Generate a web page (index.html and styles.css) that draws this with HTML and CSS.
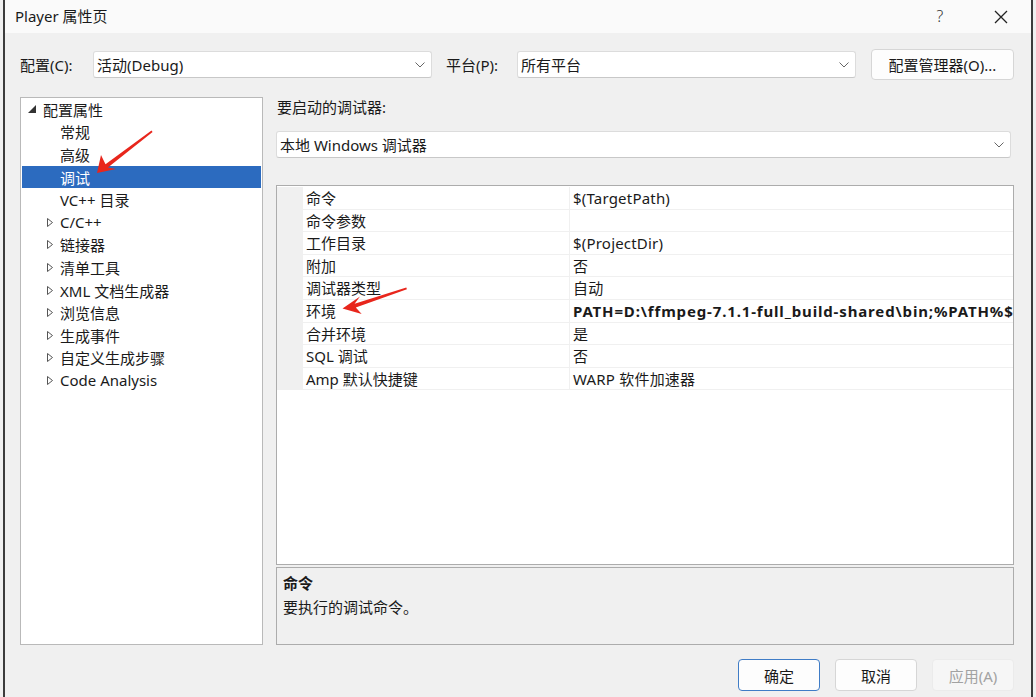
FILE: index.html
```html
<!DOCTYPE html>
<html lang="zh-CN">
<head>
    <meta charset="UTF-8">
    <title>Player 属性页</title>
    <link rel="stylesheet" href="styles.css">
</head>
<body>
    <div class="window">
        <div class="titlebar">
            <span class="title">Player 属性页</span>
            <span class="help">?</span>
            <span class="close">
                <svg width="14" height="14" viewBox="0 0 14 14"><path d="M1 1 L13 13 M13 1 L1 13" stroke="#222" stroke-width="1.3" fill="none"/></svg>
            </span>
        </div>

        <div class="config-row">
            <span class="cfg-label">配置(C):</span>
            <div class="combo combo-short">
                <span>活动(Debug)</span>
                <svg class="chevron" width="10" height="6" viewBox="0 0 10 6"><path d="M0.5 0.5 L5 5 L9.5 0.5" stroke="#666" stroke-width="1" fill="none"/></svg>
            </div>
            <span class="cfg-label platform-label">平台(P):</span>
            <div class="combo combo-short">
                <span>所有平台</span>
                <svg class="chevron" width="10" height="6" viewBox="0 0 10 6"><path d="M0.5 0.5 L5 5 L9.5 0.5" stroke="#666" stroke-width="1" fill="none"/></svg>
            </div>
            <button class="btn btn-manager">配置管理器(O)...</button>
        </div>

        <div class="main">
            <!-- дерево свойств -->
            <div class="tree">
                <div class="tree-item root">
                    <span class="twisty"><svg width="8" height="8" viewBox="0 0 8 8"><polygon points="0,8 8,8 8,0" fill="#333"/></svg></span>
                    配置属性
                </div>
                <div class="tree-item child">常规</div>
                <div class="tree-item child">高级</div>
                <div class="tree-item child selected">调试</div>
                <div class="tree-item child">VC++ 目录</div>
                <div class="tree-item child"><span class="twisty"><svg width="6" height="9" viewBox="0 0 6 9"><polygon points="0.5,0.5 5.5,4.5 0.5,8.5" fill="none" stroke="#555"/></svg></span>C/C++</div>
                <div class="tree-item child"><span class="twisty"><svg width="6" height="9" viewBox="0 0 6 9"><polygon points="0.5,0.5 5.5,4.5 0.5,8.5" fill="none" stroke="#555"/></svg></span>链接器</div>
                <div class="tree-item child"><span class="twisty"><svg width="6" height="9" viewBox="0 0 6 9"><polygon points="0.5,0.5 5.5,4.5 0.5,8.5" fill="none" stroke="#555"/></svg></span>清单工具</div>
                <div class="tree-item child"><span class="twisty"><svg width="6" height="9" viewBox="0 0 6 9"><polygon points="0.5,0.5 5.5,4.5 0.5,8.5" fill="none" stroke="#555"/></svg></span>XML 文档生成器</div>
                <div class="tree-item child"><span class="twisty"><svg width="6" height="9" viewBox="0 0 6 9"><polygon points="0.5,0.5 5.5,4.5 0.5,8.5" fill="none" stroke="#555"/></svg></span>浏览信息</div>
                <div class="tree-item child"><span class="twisty"><svg width="6" height="9" viewBox="0 0 6 9"><polygon points="0.5,0.5 5.5,4.5 0.5,8.5" fill="none" stroke="#555"/></svg></span>生成事件</div>
                <div class="tree-item child"><span class="twisty"><svg width="6" height="9" viewBox="0 0 6 9"><polygon points="0.5,0.5 5.5,4.5 0.5,8.5" fill="none" stroke="#555"/></svg></span>自定义生成步骤</div>
                <div class="tree-item child"><span class="twisty"><svg width="6" height="9" viewBox="0 0 6 9"><polygon points="0.5,0.5 5.5,4.5 0.5,8.5" fill="none" stroke="#555"/></svg></span>Code Analysis</div>
            </div>

            <div class="pane">
                <div class="pane-label">要启动的调试器:</div>
                <div class="combo combo-wide">
                    <span>本地 Windows 调试器</span>
                    <svg class="chevron" width="10" height="6" viewBox="0 0 10 6"><path d="M0.5 0.5 L5 5 L9.5 0.5" stroke="#666" stroke-width="1" fill="none"/></svg>
                </div>

                <!-- сетка свойств -->
                <div class="grid">
                    <div class="prop-row"><span class="gutter"></span><span class="name">命令</span><span class="value">$(TargetPath)</span></div>
                    <div class="prop-row"><span class="gutter"></span><span class="name">命令参数</span><span class="value"></span></div>
                    <div class="prop-row"><span class="gutter"></span><span class="name">工作目录</span><span class="value">$(ProjectDir)</span></div>
                    <div class="prop-row"><span class="gutter"></span><span class="name">附加</span><span class="value">否</span></div>
                    <div class="prop-row"><span class="gutter"></span><span class="name">调试器类型</span><span class="value">自动</span></div>
                    <div class="prop-row"><span class="gutter"></span><span class="name">环境</span><span class="value bold">PATH=D:\ffmpeg-7.1.1-full_build-shared\bin;%PATH%$</span></div>
                    <div class="prop-row"><span class="gutter"></span><span class="name">合并环境</span><span class="value">是</span></div>
                    <div class="prop-row"><span class="gutter"></span><span class="name">SQL 调试</span><span class="value">否</span></div>
                    <div class="prop-row"><span class="gutter"></span><span class="name">Amp 默认快捷键</span><span class="value">WARP 软件加速器</span></div>
                </div>

                <div class="desc">
                    <div class="desc-title">命令</div>
                    <div>要执行的调试命令。</div>
                </div>
            </div>
        </div>

        <div class="footer">
            <button class="btn btn-ok">确定</button>
            <button class="btn">取消</button>
            <button class="btn btn-disabled">应用(A)</button>
        </div>
    </div>

    <!-- красные стрелки поверх скриншота -->
    <svg class="annotations" width="1036" height="697" viewBox="0 0 1036 697">
        <polygon points="97,173 101,155 105.5,164.3 151.5,130.5 152.6,131.9 107.9,167.5 116,169" fill="#e8261c"/>
        <polygon points="342.5,308.5 360,296.5 354.6,303.7 406.3,287.6 406.9,289.2 355.8,307.5 361.7,314" fill="#e8261c"/>
    </svg>
</body>
</html>
```

FILE: styles.css
```css
* {
    box-sizing: border-box;
}

html, body {
    margin: 0;
    padding: 0;
}

body {
    width: 1036px;
    height: 697px;
    overflow: hidden;
    position: relative;
    background: #f0f0f0;
    font-family: "Noto Sans", "Noto Sans CJK SC", sans-serif;
    font-size: 15px;
    color: #1a1a1a;
}

/* Окно диалога */
.window {
    margin-left: 3px;
    width: 1030px;
    height: 697px;
    border-left: 2px solid #3c3c3c;
    border-right: 2px solid #3c3c3c;
    display: flex;
    flex-direction: column;
}

.titlebar {
    height: 33px;
    background: #fafafa;
    display: flex;
    align-items: center;
    padding: 0 15px 2px 10px;
}

.title {
    flex: 1;
}

.help {
    width: 30px;
    text-align: center;
    font-weight: 300;
    font-size: 16px;
    color: #333;
}

.close {
    width: 30px;
    margin-left: 31px;
    display: flex;
    justify-content: center;
    padding-top: 2px;
}

/* Строка конфигурации */
.config-row {
    margin-top: 16px;
    height: 31px;
    padding-left: 15px;
    display: flex;
    align-items: center;
}

.cfg-label {
    width: 73px;
    white-space: nowrap;
}

.platform-label {
    margin-left: 14px;
    width: 71px;
}

.combo {
    height: 27px;
    background: #fff;
    border: 1px solid #dcdcdc;
    border-bottom-color: #c8c8c8;
    border-radius: 3px;
    display: flex;
    align-items: center;
    justify-content: space-between;
    padding: 0 6px 0 3px;
    white-space: nowrap;
}

.combo-short {
    width: 339px;
}

.combo-wide {
    width: 735px;
    margin-top: 14px;
}

.chevron {
    flex-shrink: 0;
}

.btn {
    font-family: inherit;
    font-size: 15px;
    color: #1a1a1a;
    background: #fdfdfd;
    border: 1px solid #d6d6d6;
    border-radius: 4px;
    width: 82px;
    height: 32px;
    padding: 0;
}

.btn-manager {
    margin-left: 15px;
    width: 143px;
    height: 31px;
}

/* Основная часть */
.main {
    margin-top: 17px;
    height: 548px;
    padding-left: 15px;
    display: flex;
    gap: 13px;
}

.tree {
    width: 243px;
    background: #fff;
    border: 1px solid #b9b9b9;
    padding: 0 1px 1px;
}

.tree-item {
    height: 22.6px;
    display: flex;
    align-items: center;
    white-space: nowrap;
}

.tree-item.root {
    padding-left: 6px;
}

.tree-item.root .twisty {
    width: 15px;
}

.tree-item.child {
    padding-left: 38px;
}

.tree-item.child .twisty {
    width: 13px;
    margin-left: -13px;
}

.twisty {
    display: flex;
    align-items: center;
}

.tree-item.selected {
    background: #2c6bbf;
    color: #fff;
}

.pane {
    width: 738px;
    display: flex;
    flex-direction: column;
}

.pane-label {
    height: 20px;
    line-height: 20px;
    padding-left: 1px;
}

/* Сетка свойств */
.grid {
    margin-top: 27px;
    height: 380px;
    background: #fff;
    border: 1px solid #acacac;
    padding-top: 1px;
    overflow: hidden;
}

.prop-row {
    display: grid;
    grid-template-columns: 26px 267px 1fr;
    height: 22.6px;
    border-bottom: 1px solid #f0f0f0;
    white-space: nowrap;
}

.gutter {
    background: #f0f0f0;
}

.name {
    padding-left: 3px;
    line-height: 22.6px;
    border-right: 1px solid #f0f0f0;
}

.value {
    padding-left: 3px;
    line-height: 22.6px;
    overflow: hidden;
    letter-spacing: 0.2px;
}

.value.bold {
    font-weight: bold;
    letter-spacing: 0.85px;
}

.desc {
    margin-top: 2px;
    height: 78px;
    border: 1px solid #acacac;
    padding: 3px 6px;
    line-height: 24px;
}

.desc-title {
    font-weight: bold;
}

/* Кнопки внизу */
.footer {
    margin-top: 14px;
    display: flex;
    justify-content: flex-end;
    gap: 15px;
    padding-right: 17px;
}

.btn-ok {
    border-color: #3f7cc6;
}

.btn-disabled {
    background: #f6f6f6;
    border-color: #ebebeb;
    color: #a2a2a2;
}

.annotations {
    position: absolute;
    left: 0;
    top: 0;
    pointer-events: none;
}
```
